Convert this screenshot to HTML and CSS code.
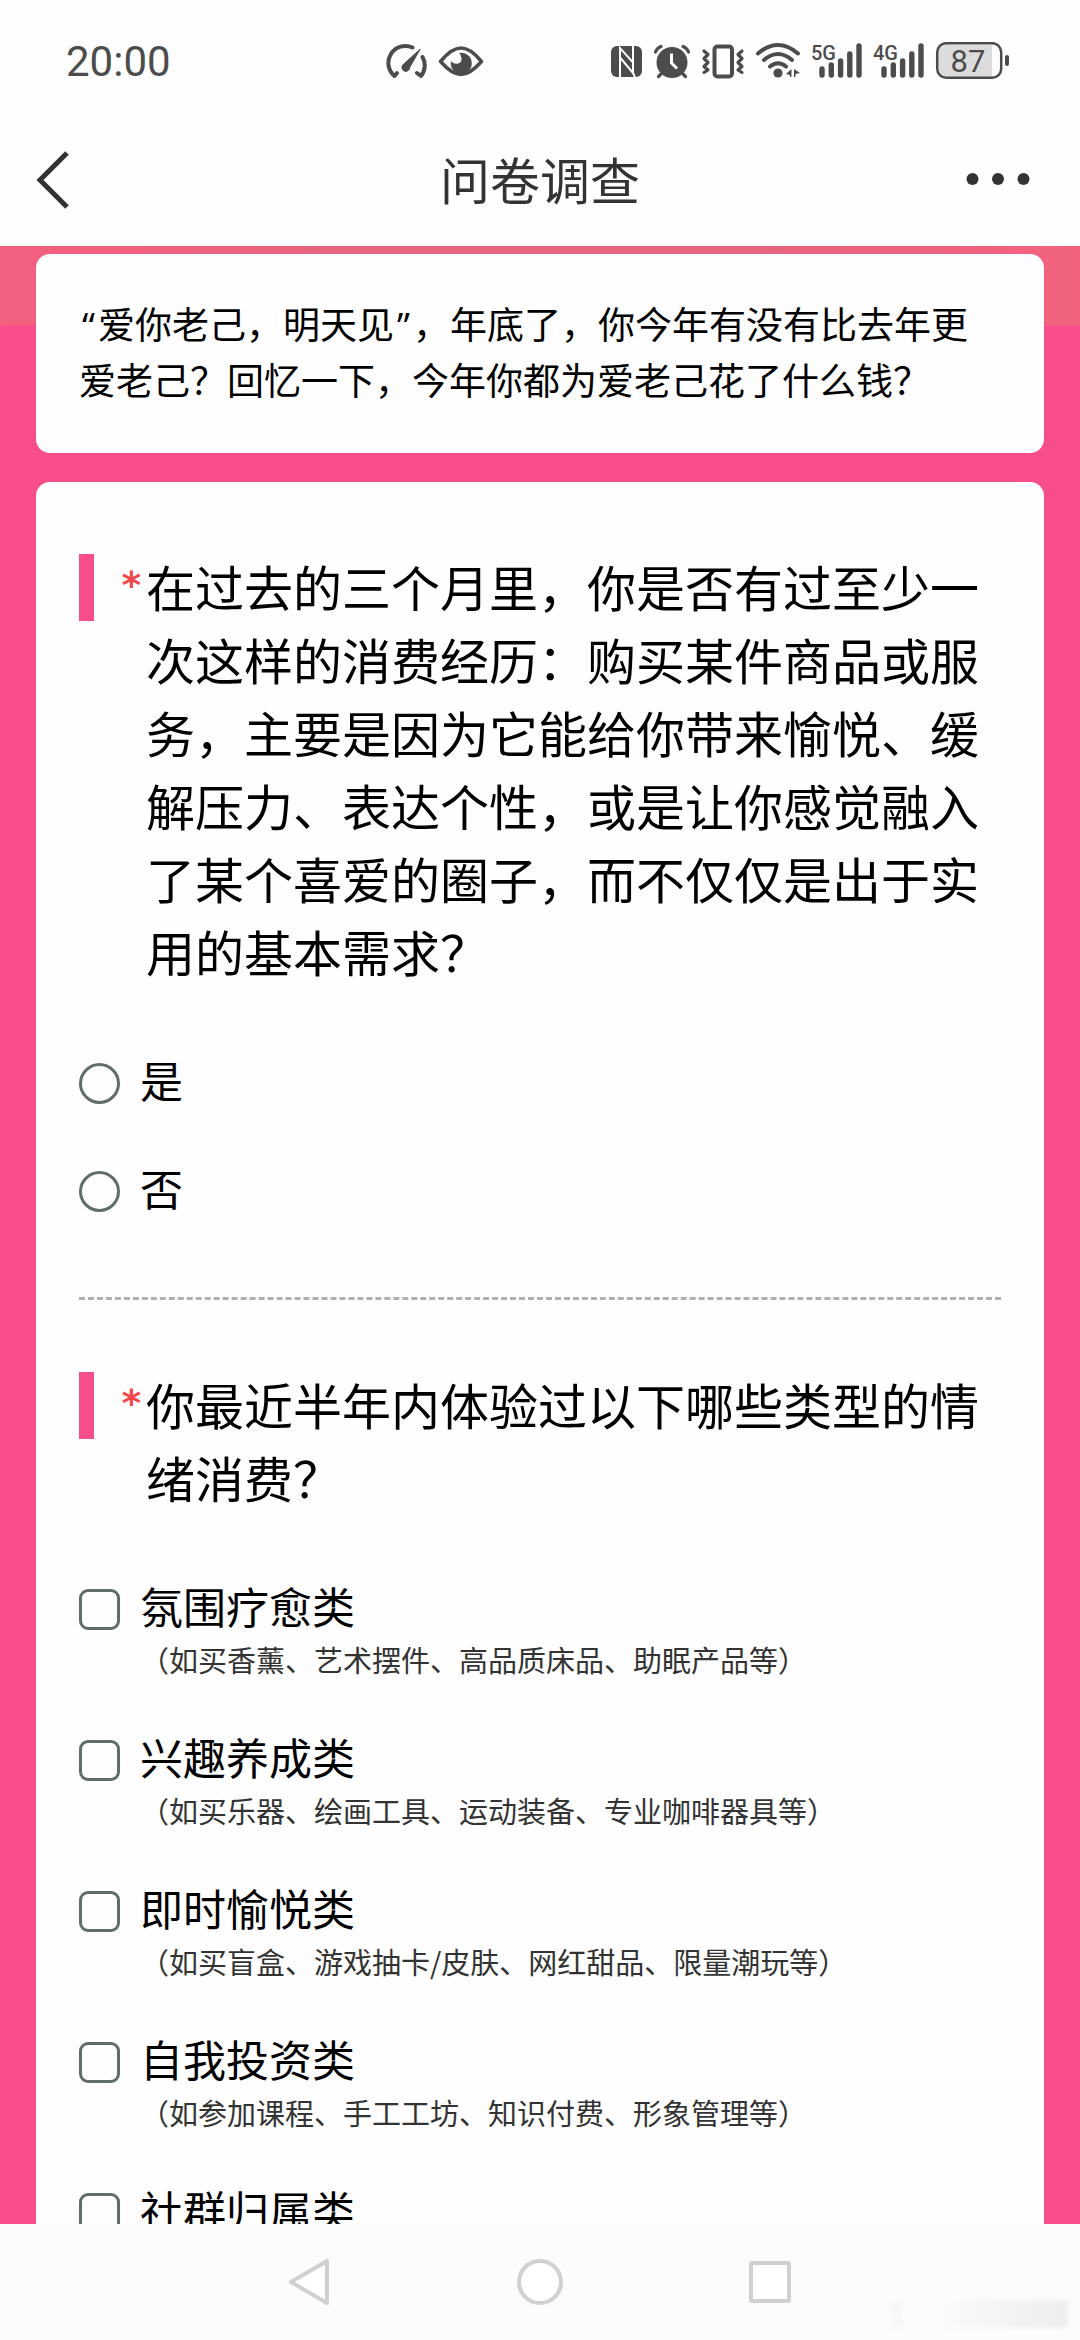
FILE: index.html
```html
<!DOCTYPE html>
<html lang="zh-CN">
<head>
<meta charset="utf-8">
<meta name="viewport" content="width=device-width, initial-scale=1">
<title>问卷调查</title>
<link rel="stylesheet" href="styles.css">
</head>
<body>
<div class="screen">
  <div class="status">
    <time class="clock">20:00</time>
    <svg class="status-mid" width="98" height="40" viewBox="386 42 98 40" fill="none" stroke="#4c4c4c" stroke-width="4" stroke-linecap="round" stroke-linejoin="round" aria-hidden="true">
      <path d="M412.500 47.500A17 17 0 0 0 394.500 76L397 73M422.500 57A17 17 0 0 1 421 76L417 73"/>
      <path d="M420 49.500L409.800 67.200A4 4 0 1 1 403.600 64Z" fill="#4c4c4c" stroke-width="1"/>
      <path d="M440.500 61.500C449 51 455 48 461 48S473 51 481.500 61.500C473 71 467 74.500 461 74.500S449 71 440.500 61.500Z" stroke-width="3.600"/>
      <path d="M459 53A10.500 10.500 0 1 1 451 61C454 66 464 64 461 57Q461 54 459 53Z" fill="#4c4c4c" stroke="none"/>
    </svg>
    <svg class="status-end" width="400" height="40" viewBox="610 42 400 40" fill="#4c4c4c" aria-label="手机状态">
      <rect x="611" y="46" width="31" height="31" rx="6"/>
      <path d="M620 77V48L633 62.500V46M620 57.500L633 73V62.500M633 73L635 77" fill="none" stroke="#fff" stroke-width="2"/>
      <circle cx="672" cy="62.500" r="15.500"/>
      <path d="M655.500 52Q657 48 661 46.500M688.500 52Q687 48 683 46.500M661 74L658.500 76.500M683 74L685.500 76.500" fill="none" stroke="#4c4c4c" stroke-width="3.200" stroke-linecap="round"/>
      <path d="M671.500 53.500V63L677 68.500" fill="none" stroke="#fff" stroke-width="3"/>
      <g fill="none" stroke="#4c4c4c" stroke-linecap="round" stroke-linejoin="round">
        <rect x="714.500" y="46.500" width="17.500" height="30" rx="3" stroke-width="4"/>
        <path d="M704 51L708 54.500L704 58.500L708 62.500L704 66.500L708 70L704 72.500M742 51L738 54.500L742 58.500L738 62.500L742 66.500L738 70L742 72.500" stroke-width="3.200"/>
        <path d="M758 53.500Q778 36.500 798 53.500M764 60Q778 48 792 60M770 66.500Q778 60 786 66.500" stroke-width="4"/>
        <path d="M822 69V75M831.300 65V75M840.600 61V75M849.800 54V75M859 46V75M884 69V75M893.300 65V75M902.600 61V75M911.800 54V75M921 46V75" stroke-width="5.400"/>
      </g>
      <circle cx="778" cy="73" r="4.600"/>
      <path d="M786 74L791.500 69V77H790V75ZM794 69L800 73L795.500 74V77H794Z"/>
      <g class="net"><text x="811" y="60">5G</text><text x="873" y="60">4G</text></g>
      <path d="M945 45H992V77H945Q938 77 938 70V52Q938 45 945 45Z" fill="#dcdcdc"/>
      <rect x="937.200" y="43.200" width="64" height="34.600" rx="9" fill="none" stroke="#4c4c4c" stroke-width="2.500"/>
      <rect x="1005" y="55" width="4" height="11" rx="2"/>
      <text class="charge" x="968" y="72" text-anchor="middle">87</text>
    </svg>
  </div>

  <header class="appbar">
    <button class="icon-btn" type="button" aria-label="返回">
      <svg width="36" height="60" viewBox="0 0 36 60" fill="none" stroke="#333" stroke-width="5"><path d="M33 3L6 30L33 57"/></svg>
    </button>
    <h1 class="title">问卷调查</h1>
    <button class="icon-btn" type="button" aria-label="更多">
      <svg width="64" height="14" viewBox="0 0 64 14" fill="#333"><circle cx="6.500" cy="6" r="6"/><circle cx="32" cy="6" r="6"/><circle cx="57.500" cy="6" r="6"/></svg>
    </button>
  </header>

  <main class="survey">
    <section class="card intro">
      <p><span class="quote">“</span>爱你老己，明天见<span class="quote">”</span>，年底了，你今年有没有比去年更爱老己？回忆一下，今年你都为爱老己花了什么钱？</p>
    </section>

    <form class="card questions">
      <section class="question" role="radiogroup" aria-labelledby="q1">
        <div class="prompt">
          <span class="star">*</span>
          <h2 id="q1">在过去的三个月里，你是否有过至少一次这样的消费经历：购买某件商品或服务，主要是因为它能给你带来愉悦、缓解压力、表达个性，或是让你感觉融入了某个喜爱的圈子，而不仅仅是出于实用的基本需求？</h2>
        </div>
        <div class="options">
          <label class="option"><input type="radio" name="q1"><span>是</span></label>
          <label class="option"><input type="radio" name="q1"><span>否</span></label>
        </div>
      </section>

      <section class="question" role="group" aria-labelledby="q2">
        <div class="prompt">
          <span class="star">*</span>
          <h2 id="q2">你最近半年内体验过以下哪些类型的情绪消费？</h2>
        </div>
        <div class="options">
          <label class="option"><input type="checkbox" name="q2"><span>氛围疗愈类<small>（如买香薰、艺术摆件、高品质床品、助眠产品等）</small></span></label>
          <label class="option"><input type="checkbox" name="q2"><span>兴趣养成类<small>（如买乐器、绘画工具、运动装备、专业咖啡器具等）</small></span></label>
          <label class="option"><input type="checkbox" name="q2"><span>即时愉悦类<small>（如买盲盒、游戏抽卡/皮肤、网红甜品、限量潮玩等）</small></span></label>
          <label class="option"><input type="checkbox" name="q2"><span>自我投资类<small>（如参加课程、手工工坊、知识付费、形象管理等）</small></span></label>
          <label class="option"><input type="checkbox" name="q2"><span>社群归属类</span></label>
        </div>
      </section>
    </form>
  </main>

  <nav class="sysnav" aria-label="系统导航">
    <button type="button" aria-label="返回"><svg width="46" height="50" viewBox="0 0 46 50"><path d="M40 4V46L4 25Z"/></svg></button>
    <button type="button" aria-label="主页"><svg width="50" height="50" viewBox="0 0 50 50"><circle cx="25" cy="25" r="21"/></svg></button>
    <button type="button" aria-label="最近任务"><svg width="46" height="50" viewBox="0 0 46 50"><rect x="4" y="6" width="38" height="38" rx="1"/></svg></button>
    <span class="smudge" aria-hidden="true"></span>
  </nav>
</div>
</body>
</html>
```

FILE: styles.css
```css
* {
  box-sizing: border-box;
}

body {
  margin: 0;
  background: #fefefe;
  color: #000;
  font-family: "Noto Sans CJK SC", sans-serif;
  text-spacing-trim: space-all;
}

h1,
h2,
p {
  margin: 0;
  font-weight: 400;
}

button {
  padding: 0;
  border: 0;
  background: none;
}

svg {
  display: block;
}

.screen {
  display: flex;
  flex-direction: column;
  height: 100vh;
  overflow: hidden;
}

/* Status bar */
.status {
  display: grid;
  grid-template-columns: 320px 1fr auto;
  align-items: center;
  flex: none;
  height: 114px;
  padding: 10px 70px 0 66px;
}

.clock {
  color: #4c4c4c;
  font: 400 42px/48px Roboto, sans-serif;
}

.net {
  font: 500 20px Roboto, sans-serif;
}

.charge {
  font: 400 31px Roboto, sans-serif;
}

/* Title bar */
.appbar {
  display: flex;
  align-items: center;
  justify-content: space-between;
  flex: none;
  height: 132px;
  padding: 0 34px;
}

.icon-btn {
  display: flex;
  align-items: center;
  flex: 0 0 80px;
  height: 64px;
}

.title {
  padding-bottom: 4px;
  color: #333;
  font-size: 50px;
  line-height: 72px;
}

/* Survey */
.survey {
  display: flex;
  flex-direction: column;
  gap: 29px;
  flex: 1;
  min-height: 0;
  overflow: hidden;
  padding: 8px 36px 0;
  background: linear-gradient(90deg, #f4607f, #e9647f 30%, #e9647f 70%, #f2627f) top / 100% 80px no-repeat #f74e8b;
}

.card {
  flex: none;
  border-radius: 14px;
  background: #fefefe;
}

.intro {
  padding: 41px 43px 46px;
  font-size: 37px;
  line-height: 56px;
}

.quote {
  display: inline-block;
  width: 19px;
  font-family: "Open Sans", sans-serif;
  line-height: 37px;
  text-align: center;
}

.questions {
  padding: 0 43px;
}

.question {
  padding: 67px 0 77px;
}

.question + .question {
  border-top: 3px dashed #b0b0b0;
}

.prompt {
  display: flex;
  align-items: flex-start;
  margin-bottom: 60px;
}

.prompt::before {
  content: "";
  flex: none;
  width: 15px;
  height: 67px;
  margin-top: 5px;
  background: #f74e8b;
}

.prompt h2 {
  flex: 1;
  padding-right: 20px;
  font-size: 49px;
  line-height: 73px;
}

.star {
  flex: 0 0 52px;
  padding-right: 5px;
  color: #f5474b;
  font-family: "DejaVu Sans", sans-serif;
  font-size: 37px;
  font-weight: 700;
  line-height: 73px;
  text-align: right;
}

.options {
  display: flex;
  flex-direction: column;
  gap: 43px;
}

.option {
  display: flex;
  align-items: flex-start;
  gap: 20px;
  font-size: 43px;
  line-height: 65px;
}

.option input {
  appearance: none;
  flex: none;
  width: 41px;
  height: 41px;
  margin: 16px 0 0;
  border: 3px solid #5f6e69;
  border-radius: 9px;
}

.option input[type="radio"] {
  border-radius: 50%;
}

.option small {
  display: block;
  color: #333;
  font-size: 29px;
  line-height: 43px;
}

/* System navigation */
.sysnav {
  position: relative;
  display: flex;
  align-items: center;
  justify-content: center;
  gap: 182px;
  flex: none;
  height: 116px;
  background: #fcfcfc;
}

.sysnav svg {
  fill: #fff;
  stroke: #d0d0d0;
  stroke-width: 4;
  stroke-linejoin: round;
}

.smudge {
  position: absolute;
  right: 12px;
  bottom: 12px;
  width: 176px;
  height: 28px;
  background:
    linear-gradient(90deg, #f7f7f7, #f7f7f7) left / 10px 100% no-repeat,
    linear-gradient(90deg, #fcfcfc, #ededed) right / 140px 100% no-repeat;
  filter: blur(2px);
}
```
